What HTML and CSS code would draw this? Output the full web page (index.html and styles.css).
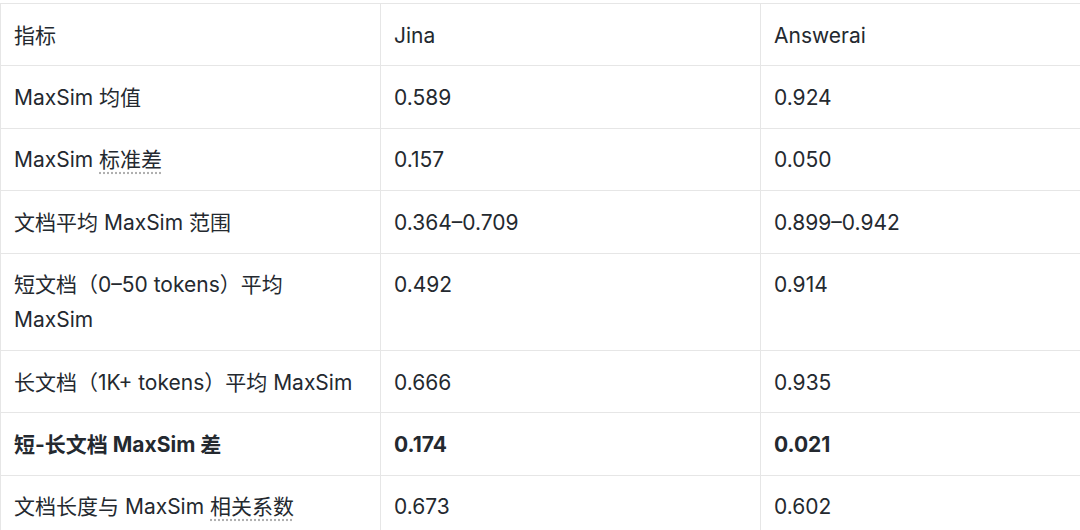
FILE: index.html
```html
<!DOCTYPE html>
<html lang="zh">
<head>
<meta charset="utf-8">
<link rel="stylesheet" href="styles.css">
</head>
<body>
<div class="wrap">
<table class="metrics">
  <thead>
    <tr><th>指标</th><th>Jina</th><th>Answerai</th></tr>
  </thead>
  <tbody>
    <tr><td>MaxSim 均值</td><td>0.589</td><td>0.924</td></tr>
    <tr><td>MaxSim <span class="dot">标准差</span></td><td>0.157</td><td>0.050</td></tr>
    <tr><td>文档平均 MaxSim 范围</td><td>0.364–0.709</td><td>0.899–0.942</td></tr>
    <tr><td>短文档（0–50 tokens）平均<br>MaxSim</td><td>0.492</td><td>0.914</td></tr>
    <tr><td>长文档（1K+ tokens）平均 MaxSim</td><td>0.666</td><td>0.935</td></tr>
    <tr class="strong"><td>短-长文档 MaxSim 差</td><td>0.174</td><td>0.021</td></tr>
    <tr><td>文档长度与 MaxSim <span class="dot">相关系数</span></td><td>0.673</td><td>0.602</td></tr>
  </tbody>
</table>
</div>
</body>
</html>
```
FILE: styles.css
```css
html, body {
  margin: 0;
  padding: 0;
  background: #ffffff;
}
body {
  overflow: hidden;
  width: 1080px;
  height: 530px;
}
.wrap {
  padding-top: 3px;
  width: 1080px;
  height: 527px;
  overflow: hidden;
}
.metrics {
  border-collapse: collapse;
  table-layout: fixed;
  width: 1080px;
  font-family: "Inter", "Noto Sans CJK SC", sans-serif;
  font-size: 21px;
  line-height: 35px;
  color: #24292f;
}
.metrics th,
.metrics td {
  border: 1px solid #e6e6e6;
  padding: 13.7px 13px 12.7px 13px;
  text-align: left;
  vertical-align: top;
  font-weight: 400;
}
.metrics th:last-child,
.metrics td:last-child {
  border-right: none;
}
.metrics th:nth-child(1),
.metrics td:nth-child(1),
.metrics th:nth-child(2),
.metrics td:nth-child(2) { width: 353px; }
.metrics .strong td {
  font-weight: 700;
}
.dot {
  text-decoration: underline dotted #b0b0b0;
  text-underline-offset: 5px;
}
```
